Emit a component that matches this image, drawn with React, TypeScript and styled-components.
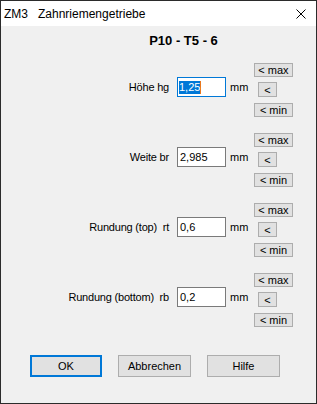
import React from "react";
import styled, { createGlobalStyle } from "styled-components";

const GlobalStyle = createGlobalStyle`
  html, body {
    margin: 0;
    padding: 0;
    background: #f0f0f0;
  }
  body {
    font-family: "Liberation Sans", Arial, sans-serif;
  }
`;

const Window = styled.div`
  width: 317px;
  height: 404px;
  box-sizing: border-box;
  border: 1px solid #2b2b2b;
  background: #f0f0f0;
  display: flex;
  flex-direction: column;
  font-family: "Liberation Sans", Arial, sans-serif;
  color: #000;
  overflow: hidden;
`;

const TitleBar = styled.div`
  height: 25px;
  background: #ffffff;
  display: flex;
  align-items: center;
  padding-left: 3px;
  font-size: 12px;
  gap: 10px;
`;

const TitleText = styled.span`
  white-space: nowrap;
`;

const CloseIcon = styled.svg`
  margin-left: auto;
  margin-right: 10px;
  width: 10px;
  height: 10px;
`;

const Heading = styled.div`
  margin-top: 7px;
  height: 15px;
  line-height: 15px;
  font-size: 13px;
  font-weight: bold;
  text-align: center;
  padding-left: 50px;
`;

const Groups = styled.div`
  margin-top: 15px;
  display: flex;
  flex-direction: column;
  gap: 16px;
`;

const Group = styled.div`
  display: flex;
  align-items: flex-start;
  height: 54px;
`;

const FieldRow = styled.div`
  display: flex;
  align-items: center;
  margin-top: 14px;
  font-size: 11px;
`;

const Label = styled.div`
  width: 168px;
  text-align: right;
  white-space: pre;
  margin-right: 8px;
  letter-spacing: -0.2px;
`;

const Field = styled.div<{ $focused?: boolean }>`
  width: 49px;
  height: 20px;
  box-sizing: border-box;
  border: 1px solid ${(p) => (p.$focused ? "#0078d7" : "#7a7a7a")};
  background: #ffffff;
  display: flex;
  align-items: center;
  padding-left: 1px;
  line-height: 13px;
  font-size: 11px;
`;

const FieldText = styled.span<{ $selected?: boolean }>`
  padding-left: ${(p) => (p.$selected ? "0" : "1px")};
  background: ${(p) => (p.$selected ? "#0078d7" : "transparent")};
  color: ${(p) => (p.$selected ? "#ffffff" : "#000000")};
  border-right: ${(p) => (p.$selected ? "1px solid #e8771e" : "none")};
`;

const Unit = styled.div`
  width: 24px;
  margin-left: 4px;
`;

const ButtonColumn = styled.div`
  display: flex;
  flex-direction: column;
  align-items: flex-start;
`;

const SmallButton = styled.div<{ $narrow?: boolean; $h: number; $mt: number }>`
  box-sizing: border-box;
  width: ${(p) => (p.$narrow ? "19px" : "39px")};
  height: ${(p) => p.$h}px;
  margin-top: ${(p) => p.$mt}px;
  margin-left: ${(p) => (p.$narrow ? "4px" : "0")};
  background: #e1e1e1;
  border: 1px solid #adadad;
  font-size: 11px;
  line-height: 12px;
  display: flex;
  align-items: center;
  justify-content: center;
  white-space: pre;
`;

const Footer = styled.div`
  margin-top: 28px;
  padding-left: 29px;
  display: flex;
  gap: 16px;
`;

const DialogButton = styled.div<{ $default?: boolean }>`
  box-sizing: border-box;
  width: ${(p) => (p.$default ? "72px" : "73px")};
  height: 22px;
  background: #e1e1e1;
  border: ${(p) => (p.$default ? "2px solid #0078d7" : "1px solid #adadad")};
  font-size: 11px;
  display: flex;
  align-items: center;
  justify-content: center;
`;

type Row = { label: string; value: string; focused?: boolean };

const rows: Row[] = [
  { label: "Höhe hg", value: "1,25", focused: true },
  { label: "Weite br", value: "2,985" },
  { label: "Rundung (top)  rt", value: "0,6" },
  { label: "Rundung (bottom)  rb", value: "0,2" },
];

export default function App() {
  return (
    <>
      <GlobalStyle />
      <Window>
        <TitleBar>
          <TitleText>ZM3</TitleText>
          <TitleText>Zahnriemengetriebe</TitleText>
          <CloseIcon viewBox="0 0 10 10">
            <path d="M0.5 0.5 L9.5 9.5 M9.5 0.5 L0.5 9.5" stroke="#000" strokeWidth="1" fill="none" />
          </CloseIcon>
        </TitleBar>
        <Heading>P10 - T5 - 6</Heading>
        <Groups>
          {rows.map((r) => (
            <Group key={r.label}>
              <FieldRow>
                <Label>{r.label}</Label>
                <Field $focused={r.focused}>
                  <FieldText $selected={r.focused}>{r.value}</FieldText>
                </Field>
                <Unit>mm</Unit>
              </FieldRow>
              <ButtonColumn>
                <SmallButton $h={14} $mt={0}>{"< max"}</SmallButton>
                <SmallButton $narrow $h={15} $mt={5}>{"<"}</SmallButton>
                <SmallButton $h={14} $mt={6}>{"< min"}</SmallButton>
              </ButtonColumn>
            </Group>
          ))}
        </Groups>
        <Footer>
          <DialogButton $default>OK</DialogButton>
          <DialogButton>Abbrechen</DialogButton>
          <DialogButton>Hilfe</DialogButton>
        </Footer>
      </Window>
    </>
  );
}
